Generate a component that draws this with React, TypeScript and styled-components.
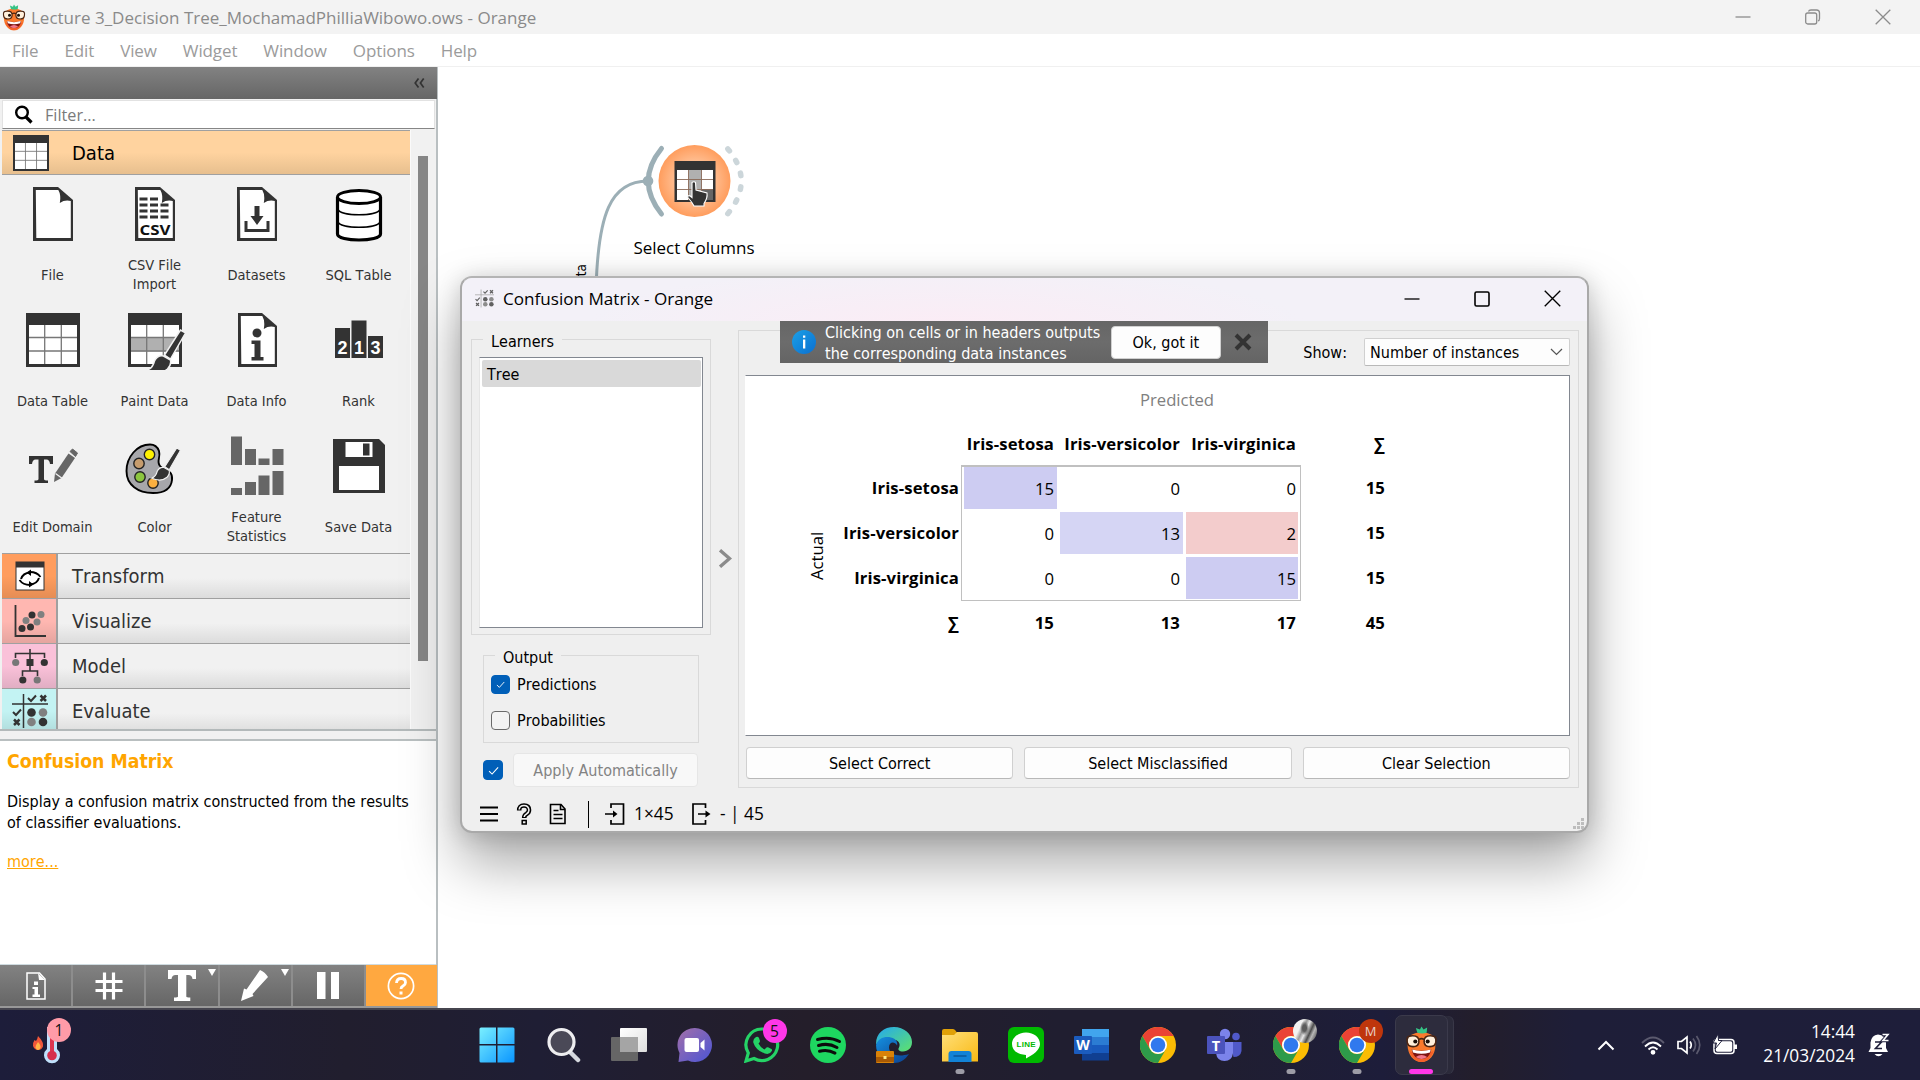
import React from "react";
import styled, { createGlobalStyle, css } from "styled-components";

const SEGOE = `"Open Sans", "Noto Sans", sans-serif`;
const TAHOMA = `"DejaVu Sans Condensed", "DejaVu Sans", sans-serif`;
const INK = "#333333";

const GlobalStyle = createGlobalStyle`
  *, *::before, *::after { box-sizing: border-box; }
  html, body { margin: 0; padding: 0; overflow: hidden; background: #fff; }
  svg { display: block; flex: none; }
`;

/* ---------- desktop shell ---------- */

const Desktop = styled.div`
  position: relative;
  width: 1920px;
  height: 1080px;
  overflow: hidden;
  display: flex;
  flex-direction: column;
  background: #fff;
  font-family: ${TAHOMA};
  font-size: 16px;
  font-kerning: none;
  color: #000;
`;

const TitleBar = styled.header`
  height: 34px;
  flex: none;
  display: flex;
  align-items: center;
  background: #f3f3f3;
  padding-left: 2px;
  color: #8a8a8a;
  font: 17px/34px ${SEGOE};
`;

const TitleText = styled.span`
  flex: 1;
  margin-left: 5px;
  padding-top: 2px;
`;

const WindowButtons = styled.div<{ $gap: number; $end: number }>`
  display: flex;
  align-items: center;
  gap: ${(p) => p.$gap}px;
  padding-right: ${(p) => p.$end}px;
`;

const MenuBar = styled.nav`
  height: 33px;
  flex: none;
  display: flex;
  gap: 26px;
  padding-left: 12px;
  border-bottom: 1px solid #f0f0f0;
  color: #9b9b9b;
  font: 17px/34px ${SEGOE};
  letter-spacing: -0.12px;
`;

const Workspace = styled.main`
  flex: 1;
  min-height: 0;
  display: flex;
`;

/* ---------- left panel ---------- */

const SidePanel = styled.aside`
  width: 438px;
  flex: none;
  display: flex;
  flex-direction: column;
  background: #f1f1f1;
  border-right: 2px solid #b9bfc1;
`;

const PanelHeader = styled.div`
  height: 32px;
  flex: none;
  margin-right: -1px;
  display: flex;
  justify-content: flex-end;
  align-items: center;
  padding-right: 12px;
  background: linear-gradient(#828282, #666666);
`;

const FilterField = styled.div`
  height: 29px;
  flex: none;
  margin: 1px 1px 1px 2px;
  display: flex;
  align-items: center;
  background: #fff;
  border: 1px solid #e2e2e2;
  border-bottom-color: #868686;
  padding-left: 11px;
  gap: 12px;
  color: #7a7a7a;
  font: 16.2px/28px ${SEGOE};
`;

const Toolbox = styled.div`
  height: 599px;
  flex: none;
  display: flex;
  margin-left: 2px;
`;

const Categories = styled.div`
  width: 408px;
  overflow: hidden;
`;

const ScrollTrack = styled.div`
  flex: 1;
  padding: 26px 0 0 7px;
  border-left: 1px solid #fafafa;
`;

const ScrollThumb = styled.div`
  width: 10px;
  height: 505px;
  background: #868686;
`;

const CategoryRow = styled.div<{ $open?: boolean }>`
  height: 45px;
  display: flex;
  border-top: 1px solid #a0a0a0;
  background: linear-gradient(#f1f1f1 55%, #dcdcdc);
  color: #333;
  font-size: 20px;
  line-height: 45px;
  ${(p) =>
    p.$open &&
    css`
      background: linear-gradient(#ffd39f 50%, #e7bf8e);
      border-bottom: 1px solid #a0a0a0;
      color: #000;
    `}
`;

const CategoryIcon = styled.div<{ $color?: string }>`
  width: 56px;
  display: flex;
  align-items: center;
  justify-content: center;
  padding-left: 1px;
  ${(p) =>
    p.$color &&
    css`
      padding-left: 2px;
      border-right: 2px solid #a0a0a0;
      background: linear-gradient(rgba(0, 0, 0, 0) 50%, rgba(0, 0, 0, 0.1)), ${p.$color};
    `}
`;

const CategoryName = styled.span`
  padding-left: 14px;
`;

const WidgetGrid = styled.div`
  display: grid;
  grid-template-columns: repeat(4, 102px);
  grid-auto-rows: 126px;
`;

const WidgetCell = styled.div`
  display: flex;
  flex-direction: column;
  align-items: center;
  padding-top: 9px;
`;

const WidgetLabel = styled.div`
  height: 44px;
  margin-top: 9px;
  padding-right: 1px;
  display: flex;
  align-items: center;
  text-align: center;
  white-space: pre-line;
  color: #333;
  font-size: 14.5px;
  line-height: 19px;
`;

const Splitter = styled.div`
  height: 12px;
  flex: none;
  border-top: 2px solid #b3b9ba;
  border-bottom: 2px solid #b9bfc0;
`;

const HelpPane = styled.section`
  flex: 1;
  background: #fff;
  padding: 8px 0 0 7px;
  border-bottom: 1px solid #cfdbe0;
  line-height: 21px;
`;

const HelpTitle = styled.h1`
  margin: 0;
  font-size: 19.3px;
  line-height: 26px;
  font-weight: 700;
  color: #ffa500;
`;

const HelpText = styled.p`
  margin: 16px 0 18px;
  white-space: pre-line;
`;

const MoreLink = styled.a`
  color: #ffa500;
  text-decoration: underline;
`;

const ToolRow = styled.div`
  height: 43px;
  flex: none;
  margin-right: -1px;
  display: flex;
  gap: 2px;
  background: #8d8d8d;
  border-bottom: 2px solid #989898;
`;

const ToolButton = styled.div<{ $active?: boolean }>`
  position: relative;
  flex: 1;
  display: flex;
  align-items: center;
  justify-content: center;
  background: ${(p) => (p.$active ? "#ffa840" : "linear-gradient(#828282, #666666)")};
`;

const MenuArrow = styled.i`
  position: absolute;
  top: 4px;
  right: 2px;
  border: 4.5px solid transparent;
  border-top: 7px solid #fff;
  border-bottom: 0;
`;

/* ---------- canvas ---------- */

const Canvas = styled.section`
  flex: 1;
  position: relative;
  background: #fff;
`;

const LinkLayer = styled.svg`
  position: absolute;
  left: 0;
  top: 0;
`;

const NodeLabel = styled.div`
  position: absolute;
  left: 156px;
  top: 169px;
  width: 200px;
  text-align: center;
  font: 17px/24px ${SEGOE};
`;

const LinkLabel = styled.div`
  position: absolute;
  left: 134px;
  top: 197px;
  writing-mode: vertical-rl;
  transform: rotate(180deg);
  font: 13.5px/18px ${TAHOMA};
`;

/* ---------- confusion matrix dialog ---------- */

const Dialog = styled.section`
  position: absolute;
  left: 460px;
  top: 276px;
  width: 1129px;
  height: 557px;
  display: flex;
  flex-direction: column;
  border: 2px solid #a9a9a9;
  border-top-color: #b4b4b4;
  border-radius: 12px;
  background: #efefef;
  box-shadow: 0 30px 56px rgba(0, 0, 0, 0.34), 0 2px 22px rgba(0, 0, 0, 0.16);
`;

const DialogTitle = styled.header`
  height: 43px;
  flex: none;
  display: flex;
  align-items: center;
  padding: 0 0 2px 13px;
  border-radius: 10px 10px 0 0;
  background: radial-gradient(ellipse 360px 60px at 43% 110%, #fbecf5, rgba(251, 236, 245, 0)), #f3f1f8;
  font: 17.1px/41px ${SEGOE};
`;

const DialogBody = styled.div`
  flex: 1;
  display: flex;
  min-height: 0;
`;

const ControlColumn = styled.div`
  width: 249px;
  flex: none;
  display: flex;
  flex-direction: column;
  padding: 18px 0 0 9px;
`;

const Group = styled.fieldset<{ $inset?: boolean }>`
  min-width: 0;
  margin: 0;
  padding: 0;
  position: relative;
  border: 1px solid #d9d9d9;
  ${(p) =>
    p.$inset
      ? css`
          width: 216px;
          height: 88px;
          margin: 20px 0 0 12px;
          padding: 19px 0 0 7px;
        `
      : css`
          width: 240px;
          height: 296px;
          padding: 17px 7px 6px;
        `}
`;

const GroupTitle = styled.span`
  position: absolute;
  left: 11px;
  top: -9px;
  padding: 0 8px;
  background: #efefef;
  line-height: 21px;
`;

const LearnerList = styled.div`
  height: 271px;
  padding: 2px 1px 0 2px;
  background: #fff;
  border: 1px solid #828790;
  border-left: 1px solid #e6e6e6;
`;

const LearnerItem = styled.div`
  height: 27px;
  padding-left: 5px;
  background: #d9d9d9;
  border-radius: 2px;
  line-height: 30px;
`;

const CheckLine = styled.label`
  height: 19px;
  margin-bottom: 17px;
  display: flex;
  align-items: center;
  gap: 7px;
  line-height: 24px;
`;

const CheckBox = styled.span<{ $on?: boolean; $size?: number }>`
  width: ${(p) => p.$size ?? 19}px;
  height: ${(p) => p.$size ?? 19}px;
  flex: none;
  display: flex;
  align-items: center;
  justify-content: center;
  border-radius: 4px;
  background: ${(p) => (p.$on ? "#005fb8" : "#f3f3f3")};
  border: 1px solid ${(p) => (p.$on ? "#005fb8" : "#6a6a6a")};
`;

const ApplyRow = styled.div`
  display: flex;
  align-items: center;
  gap: 10px;
  margin: 10px 0 0 12px;
`;

const PushButton = styled.button<{ $muted?: boolean }>`
  flex: 1;
  height: 32px;
  padding: 2px 0 0;
  border: 1px solid ${(p) => (p.$muted ? "#e6e6e6" : "#d0d0d0")};
  border-bottom-color: ${(p) => (p.$muted ? "#e6e6e6" : "#b8b8b8")};
  border-radius: 4px;
  background: ${(p) => (p.$muted ? "#f8f8f8" : "#fdfdfd")};
  color: ${(p) => (p.$muted ? "#838383" : "#000")};
  font: 16px/26px ${TAHOMA};
  ${(p) =>
    p.$muted &&
    css`
      flex: none;
      width: 185px;
      height: 34px;
    `}
`;

const Collapser = styled.div`
  width: 27px;
  flex: none;
  padding: 228px 0 0 7px;
`;

const MatrixGroup = styled.div`
  width: 841px;
  height: 458px;
  margin-top: 9px;
  padding: 7px 8px 0 6px;
  border: 1px solid #d9d9d9;
`;

const ShowRow = styled.div`
  height: 37px;
  display: flex;
  justify-content: flex-end;
  gap: 17px;
  line-height: 29px;
`;

const ComboBox = styled.div`
  width: 206px;
  height: 28px;
  display: flex;
  align-items: center;
  justify-content: space-between;
  padding: 0 6px 0 5px;
  border: 1px solid #d0d0d0;
  border-bottom-color: #b8b8b8;
  border-radius: 2px;
  background: #fdfdfd;
`;

const MatrixView = styled.div`
  height: 361px;
  background: #fff;
  border: 1px solid #828790;
  border-left-color: #fff;
  font: 16.7px/24px ${SEGOE};
`;

const MatrixGrid = styled.div`
  display: grid;
  grid-template-columns: 77px 138px 98px 126px 116px 89px;
  grid-template-rows: 46px 43px repeat(4, 45px);
`;

const AxisTop = styled.div`
  grid-column: 3 / 6;
  padding-top: 12px;
  padding-left: 92px;
  text-align: center;
  color: #808080;
`;

const AxisSide = styled.div`
  grid-column: 1;
  grid-row: 3 / 6;
  writing-mode: vertical-rl;
  transform: rotate(180deg);
  text-align: center;
  line-height: 22px;
  padding-right: 60px;
  padding-bottom: 46px;
  white-space: nowrap;
`;

const HeadCell = styled.div<{ $col: number; $row: number }>`
  grid-column: ${(p) => p.$col};
  grid-row: ${(p) => p.$row};
  display: flex;
  align-items: center;
  justify-content: flex-end;
  padding-top: ${(p) => (p.$row > 2 ? 1 : 0)}px;
  padding-right: ${(p) => (p.$col === 2 ? 2 : 5)}px;
  font-weight: 700;
  letter-spacing: 0.11px;
  white-space: nowrap;
`;

const MatrixFrame = styled.div`
  grid-column: 3 / 6;
  grid-row: 3 / 6;
  border: 1px solid #c0c0c0;
  border-top-width: 2px;
  margin-bottom: -1px;
`;

const ValueCell = styled.div<{ $col: number; $row: number; $fill?: string }>`
  grid-column: ${(p) => p.$col};
  grid-row: ${(p) => p.$row};
  margin: 2px ${(p) => (p.$col === 5 ? 3 : 2)}px 1px ${(p) => (p.$col === 3 ? 3 : 1)}px;
  padding: 1px ${(p) => (p.$col === 5 ? 2 : 3)}px 0 0;
  display: flex;
  align-items: center;
  justify-content: flex-end;
  background: ${(p) => p.$fill ?? "transparent"};
`;

const ButtonRow = styled.div`
  display: flex;
  gap: 11px;
  margin: 11px 0 0 1px;
`;

const StatusBar = styled.footer`
  height: 45px;
  flex: none;
  display: flex;
  align-items: center;
  padding: 11px 2px 0 17px;
  font: 17.3px/24px ${SEGOE};
`;

const StatusDivider = styled.i`
  width: 1px;
  height: 27px;
  margin: 0 16px 0 21px;
  background: #000;
`;

const StatusText = styled.span<{ $w: number }>`
  width: ${(p) => p.$w}px;
  margin-left: 9px;
  white-space: nowrap;
`;

const SizeGrip = styled.svg`
  align-self: flex-end;
  margin-bottom: 1px;
`;

const Spacer = styled.i<{ $w?: number }>`
  ${(p) => (p.$w ? `width: ${p.$w}px; flex: none;` : "flex: 1;")}
`;

const HintBar = styled.aside`
  position: absolute;
  left: 318px;
  top: 43px;
  width: 488px;
  height: 42px;
  display: flex;
  align-items: center;
  padding: 0 16px 0 12px;
  background: linear-gradient(#666, #6c6c6c 50%, #646464);
  color: #fff;
  line-height: 21px;
`;

const HintText = styled.p`
  margin: 1px 0 0 9px;
  width: 287px;
  white-space: pre;
`;

const HintButton = styled.button`
  width: 111px;
  height: 33px;
  margin-right: 13px;
  padding: 1px 0 0;
  border: 1px solid #d0d0d0;
  border-radius: 4px;
  background: #fdfdfd;
  font: 16px/30px ${TAHOMA};
`;

/* ---------- taskbar ---------- */

const Taskbar = styled.footer`
  position: relative;
  height: 72px;
  flex: none;
  display: flex;
  align-items: center;
  border-top: 2px solid #46454f;
  background: linear-gradient(90deg, #1d1d3a, #211e2e 18%, #1f1e34 28%, #241e2a 42%, #201e30 55%, #201e30 63%, #1d1d3a 72%, #231e2b 77%, #1e1e38 82%, #1e1e3a);
  color: #fff;
`;

const WeatherSlot = styled.div`
  width: 464px;
  padding-left: 30px;
`;

const AppSlot = styled.div<{ $focused?: boolean }>`
  position: relative;
  width: 66.13px;
  height: 60px;
  flex: none;
  display: flex;
  align-items: center;
  justify-content: center;
  ${(p) =>
    p.$focused &&
    css`
      width: 53px;
      margin-left: 5px;
      border: 1px solid #3b3a4b;
      border-radius: 7px;
      background: #2d2c3d;
      box-shadow: 6px 0 0 -1px #2b2a3a, 7px 0 0 -1px #393848;
    `}
`;

const Badge = styled.span<{ $bg: string; $fg: string; $profile?: boolean }>`
  position: absolute;
  left: ${(p) => (p.$profile ? 35 : 34)}px;
  top: 4px;
  width: 24px;
  height: 24px;
  border-radius: 50%;
  background: ${(p) => p.$bg};
  color: ${(p) => p.$fg};
  text-align: center;
  font: ${(p) => (p.$profile ? 13 : 15.5)}px/24px ${SEGOE};
`;

const WeatherBadge = styled(Badge)`
  left: 47px;
  top: 8px;
`;

const RunMark = styled.i<{ $active?: boolean }>`
  position: absolute;
  bottom: ${(p) => (p.$active ? 0 : 1)}px;
  left: 50%;
  transform: translateX(-50%);
  width: ${(p) => (p.$active ? 24 : 9)}px;
  height: 5px;
  border-radius: 3px;
  background: ${(p) => (p.$active ? "#ff37e8" : "#9d9ca6")};
`;

const Tray = styled.div`
  flex: 1;
  display: flex;
  align-items: center;
  justify-content: flex-end;
  padding-right: 30px;
`;

const Clock = styled.div`
  width: 118px;
  text-align: right;
  font: 17.3px/24px ${SEGOE};
  margin-right: 13px;
  margin-top: -2px;
  white-space: nowrap;
`;

/* ---------- drawings ---------- */

const WindowGlyph = ({ kind, color, size = 16 }: { kind: "min" | "restore" | "max" | "close"; color: string; size?: number }) => (
  <svg width={size} height={size} viewBox="0 0 16 16" fill="none" stroke={color} strokeWidth="1.3">
    {kind === "min" && <path d="M0.5 8h15" />}
    {kind === "restore" && (
      <>
        <rect x="0.700" y="4" width="11" height="11" rx="2" />
        <path d="M3.500 2.500Q4 1 6 1H11.500q3 0 3 3v5.500q0 2-1.500 2.500" />
      </>
    )}
    {kind === "max" && <rect x="1" y="1" width="14" height="14" rx="1.500" strokeWidth="1.600" />}
    {kind === "close" && <path d="M0.700 0.700l14.600 14.600M15.300 0.700L0.700 15.300" />}
  </svg>
);

const OrangeFace = ({ size }: { size: number }) => (
  <svg width={size} height={(size * 36) / 32} viewBox="0 0 32 36">
    <path d="M16 6C6.500 6 2.500 11 2.500 18.500 2.500 28 8.500 35 16 35s13.500-7 13.500-16.500C29.500 11 25.500 6 16 6z" fill="#fa7a2d" />
    <path d="M4 24c2.500 7 7 11 12 11s9.500-4 12-11c-6 4-18 4-24 0z" fill="#f4602a" />
    <path d="M12 6.500L10.500 2l4 1.500L16 .5l2 3 3.500-2-.5 5q-4.500 1.500-9 0z" fill="#35c486" />
    <circle cx="7.800" cy="14.500" r="5.200" fill="#fff0dc" />
    <circle cx="24.200" cy="14.500" r="5.200" fill="#fff0dc" />
    <path d="M2 12Q2.500 9.500 7.500 9.500q6 0 6 5.200 0 5.300-5.700 5.300T2 14.500zM30 12Q29.500 9.500 24.500 9.500q-6 0-6 5.200 0 5.300 5.700 5.300T30 14.500zM13.500 13q2.500-1.500 5 0" fill="none" stroke="#4a2614" strokeWidth="1.500" />
    <circle cx="10" cy="15" r="2" fill="#1a0f0a" />
    <circle cx="22" cy="15" r="2" fill="#1a0f0a" />
    <path d="M6.500 22.500q9.500 3 19 0c-1 6.500-5 9.500-9.500 9.500s-8.500-3-9.500-9.500z" fill="#7d1512" />
    <path d="M7 22.800q9 2.800 18 0l-.8 3q-8.200 2.300-16.400 0z" fill="#fff" />
    <path d="M10.500 30q5.500-4 11 0-5.500 4-11 0z" fill="#f2788a" />
  </svg>
);

const GridTable = ({ size, shaded }: { size: number; shaded?: boolean }) => (
  <svg width={size} height={size} viewBox="0 0 54 54">
    <rect width="54" height="54" fill={INK} />
    <rect x="3" y="12" width="48" height="39" fill="#fff" />
    {shaded && <rect x="3" y="25" width="48" height="13.500" fill="#b0b0b0" />}
    <path d="M3 24.500h48M3 38h48M18.700 12v39M35.300 12v39" stroke="#777" strokeWidth="1.300" />
  </svg>
);

const Sheet = ({ x = 10, w = 40 }: { x?: number; w?: number }) => (
  <>
    <path d={`M${x} 3h${w - 15}l15 13v41h-${w}z`} fill={INK} />
    <path d={`M${x + 2.8} 6h${w - 17.5}q3 5 1.500 13 5-3.500 11-2v37h-${w - 5.5}z`} fill="#fff" />
  </>
);

const Brush = ({ at }: { at: string }) => (
  <g transform={at}>
    <path d="M33-2L17 23l6 4L38 1z" fill={INK} stroke="#f1f1f1" strokeWidth="1.500" />
    <path d="M16 24q-6-1-9 5-2 8-8 9 13 6 21-1 4-4 3-9z" fill={INK} stroke="#f1f1f1" strokeWidth="1.500" />
  </g>
);

const widgetArt: Record<string, React.ReactNode> = {
  file: <Sheet />,
  csv: (
    <>
      <Sheet />
      <path d="M14.500 15h19M14.500 21h29M14.500 27h29M14.500 33h29" stroke={INK} strokeWidth="3" strokeDasharray="8 2.500" />
      <text x="30" y="51" textAnchor="middle" fontFamily="Open Sans" fontWeight="700" fontSize="15" fill="#111" textLength="31" lengthAdjust="spacingAndGlyphs">
        CSV
      </text>
    </>
  ),
  datasets: (
    <>
      <Sheet />
      <path d="M27.500 22h5v10h4L30 41l-6.500-9h4z" fill={INK} />
      <path d="M19 37v9.500h22V37" fill="none" stroke={INK} strokeWidth="3" />
    </>
  ),
  sql: (
    <>
      <path d="M8.500 13v37c0 8 43 8 43 0V13" fill="#fff" stroke="#000" strokeWidth="3.200" />
      <ellipse cx="30" cy="13" rx="21.500" ry="6.500" fill="#fff" stroke="#000" strokeWidth="3" />
      <path d="M9 25.500c3 7 39 7 42 0M9 38c3 7 39 7 42 0" fill="none" stroke="#000" strokeWidth="1.600" />
    </>
  ),
  info: (
    <>
      <Sheet x={11} w={39} />
      <circle cx="30" cy="23" r="4.500" fill={INK} />
      <path d="M24.500 30.500h9V47h3v3.500h-12V47h3V34h-3z" fill={INK} />
    </>
  ),
  rank: (
    <>
      <path d="M6 18h15v30H6zM22.500 10.500h15v37.500h-15zM39 26h15v22H39z" fill={INK} />
      <g fill="#fff" fontFamily="Liberation Sans" fontWeight="700" fontSize="18" textAnchor="middle">
        <text x="13.500" y="43.500">2</text>
        <text x="30" y="43.500">1</text>
        <text x="46.500" y="43.500">3</text>
      </g>
    </>
  ),
  domain: (
    <>
      <path d="M6 20h24v8h-3q-.5-4.500-3.500-4.500H21V43q0 1.500 4 1.500v2.500H11.500v-2.500q4 0 4-1.500V23.500H12.500Q9.500 23.500 9 28H6z" fill={INK} />
      <path d="M31 46l1-8.500 13.500-20L52 22 38.500 42z" fill="#666" />
      <path d="M47 15.500l2.500-2.500 5 4-2 3.500z" fill="#666" stroke="#666" />
      <path d="M32.500 37.500l6.500 4.700" stroke="#f1f1f1" strokeWidth="1.300" />
    </>
  ),
  color: (
    <>
      <path d="M25 8.500C12 8.500 1.500 21 1.500 35S13 57 28 57c11 0 18-4 19-13 1-11-7-8-12-14-4-5 1-8-1-15-1.500-4-4.500-6.500-9-6.500z" fill="#a7a7ab" stroke="#000" strokeWidth="1.900" />
      <g stroke="#222" strokeWidth="1.400">
        <circle cx="24.500" cy="18.500" r="5.200" fill="#fff200" />
        <circle cx="14" cy="27.500" r="5.200" fill="#c69c6d" />
        <circle cx="15" cy="41" r="5.200" fill="#8cc63f" />
        <circle cx="28" cy="47" r="5.200" fill="#fbb040" />
      </g>
      <Brush at="translate(27 13.500) scale(.75)" />
    </>
  ),
  stats: (
    <g fill="#666">
      <path d="M4 0.500h11v28.500H4zM18 13h11v16H18zM31.500 22.500h11V29h-11zM45.500 13h11v16h-11z" />
      <path d="M4 52h11v7H4zM18 46h11v13H18zM31.500 39.500h11V59h-11zM45.500 35h11v24h-11z" />
    </g>
  ),
  save: (
    <>
      <path d="M4 3h46l6 6v48H4z" fill={INK} />
      <path d="M16.500 6h27v15h-27zM10 30h40v24H10z" fill="#fff" />
      <rect x="34" y="7.500" width="6.500" height="12" fill={INK} />
    </>
  ),
  table: (
    <g transform="translate(3 3)">
      <GridTable size={54} />
    </g>
  ),
  paint: (
    <>
      <g transform="translate(3 3)">
        <GridTable size={54} shaded />
      </g>
      <Brush at="translate(22.500 22)" />
    </>
  ),
};

const ConfusionGlyph = ({ size, ink = INK, soft = "#808080", rule = INK }: { size: number; ink?: string; soft?: string; rule?: string }) => (
  <svg width={size} height={size} viewBox="0 0 36 36" fill="none">
    <path d="M0 11h36M11.500 1v34" stroke={rule} strokeWidth="1.500" />
    <path d="M16 5l3 3 5-5.500M1 19l3 3 5-5.500" stroke={ink} strokeWidth="2" />
    <path d="M28.500 2.500l5.500 5.500M34 2.500L28.500 8M2 26.500l5.500 5.500M7.500 26.500L2 32" stroke={ink} strokeWidth="2.500" />
    <circle cx="19.500" cy="19.500" r="4.300" fill={ink} />
    <circle cx="31" cy="19.500" r="4.300" fill={soft} />
    <circle cx="19.500" cy="29" r="4.300" fill={soft} />
    <circle cx="31" cy="29" r="4.300" fill={ink} />
  </svg>
);

const TransformGlyph = () => (
  <svg width="30" height="30" viewBox="0 0 30 30">
    <rect x="0.500" y="0.500" width="29" height="29" fill={INK} />
    <rect x="1.500" y="6.500" width="27" height="22" fill="#fff" />
    <path d="M6 18q2-6 9-6.500M24 17q-2 6-9 6.500" fill="none" stroke="#000" strokeWidth="2" />
    <path d="M16 8.500v6.500L11.500 11.500zM14 20v6.500l4.500-3z" fill="#000" />
    <path d="M15 11q7 0 10.500 5M15 24q-7 0-10.500-5" fill="none" stroke="#000" strokeWidth="1.800" />
  </svg>
);

const VisualizeGlyph = () => (
  <svg width="34" height="34" viewBox="0 0 34 34">
    <path d="M2.500 1v31H33" fill="none" stroke={INK} strokeWidth="1.800" />
    <g fill={INK}>
      <circle cx="9" cy="24.500" r="3.500" />
      <circle cx="17.500" cy="23" r="3.500" />
      <circle cx="19" cy="11" r="3.500" />
    </g>
    <g fill="#808080">
      <circle cx="13" cy="16.500" r="3.500" />
      <circle cx="24" cy="18" r="3.500" />
      <circle cx="28" cy="10.500" r="3.500" />
    </g>
  </svg>
);

const ModelGlyph = () => (
  <svg width="36" height="36" viewBox="0 0 36 36">
    <path d="M3.500 10V5.500h29V10M18 1v10M10.500 28v-5h15v5M18 18v5" fill="none" stroke={INK} strokeWidth="1.600" />
    <rect x="14.500" y="11" width="7" height="7" fill={INK} />
    <circle cx="3.700" cy="14.500" r="3.600" fill="#777" />
    <circle cx="32.300" cy="14.500" r="3.600" fill={INK} />
    <circle cx="10.800" cy="32" r="3.600" fill={INK} />
    <circle cx="25.200" cy="32" r="3.600" fill="#777" />
  </svg>
);

const Check = ({ size }: { size: number }) => (
  <svg width={size} height={size} viewBox="0 0 10 10" fill="none" stroke="#fff" strokeWidth="1">
    <path d="M1 5.500l2.700 2.700L9.200 2.200" />
  </svg>
);

const Chrome = () => (
  <svg width="36" height="36" viewBox="0 0 36 36">
    <circle cx="18" cy="18" r="18" fill="#fbbc04" />
    <path d="M2.400 9A18 18 0 0 1 33.600 9H18a9 9 0 0 0-7.800 13.500z" fill="#ea4335" />
    <path d="M2.400 9l7.800 13.500A9 9 0 0 0 25.800 22.500L18 36A18 18 0 0 1 2.400 9z" fill="#2e9b4a" />
    <circle cx="18" cy="18" r="9" fill="#fff" />
    <circle cx="18" cy="18" r="7.300" fill="#3079ee" />
  </svg>
);

const Gradient = ({ id, from, to }: { id: string; from: string; to: string }) => (
  <linearGradient id={id} x1="0" y1="0" x2="1" y2="1">
    <stop stopColor={from} />
    <stop offset="1" stopColor={to} />
  </linearGradient>
);

const appArt: Record<string, React.ReactNode> = {
  windows: (
    <>
      <defs><Gradient id="win" from="#7af0ff" to="#0a95ff" /></defs>
      <path d="M.5 2q0-1.500 1.500-1.500h15V17H.500zM18.500.500h15.500q1.500 0 1.500 1.500v15H18.500zM.5 18.500H17v17H2q-1.500 0-1.500-1.500zM18.500 18.500h17V34q0 1.500-1.500 1.500H18.500z" fill="url(#win)" />
    </>
  ),
  search: (
    <>
      <path d="M25 25l8 8" stroke="#d5d8de" strokeWidth="4.500" strokeLinecap="round" />
      <circle cx="16.500" cy="15" r="12.500" fill="#4a4957" stroke="#eeeef0" strokeWidth="3.200" />
    </>
  ),
  taskview: (
    <>
      <defs><Gradient id="tv" from="#fff" to="#dedede" /></defs>
      <rect x="0" y="10" width="27" height="24" rx="1" fill="#666" />
      <rect x="9" y="1" width="27" height="24" rx="1" fill="url(#tv)" />
      <rect x="9" y="10" width="18" height="15" fill="#a5a5a5" />
    </>
  ),
  chat: (
    <>
      <defs><Gradient id="chat" from="#a36fa8" to="#4b55d6" /></defs>
      <path d="M18 1a17 17 0 1 1-7 32.500L1.500 35l1-9A17 17 0 0 1 18 1z" fill="url(#chat)" />
      <rect x="7.500" y="11" width="14.500" height="14" rx="2" fill="#fff" />
      <path d="M23.500 16l4-3.500v11l-4-3.500z" fill="#fff" />
    </>
  ),
  whatsapp: (
    <>
      <path d="M18.500 2A15.800 15.800 0 1 1 10 31.500L2 34l2.300-8A15.800 15.800 0 0 1 18.500 2z" fill="none" stroke="#25d366" strokeWidth="3.200" />
      <path d="M12 10q2-1 3 1l1 3q0 1-1.500 2.500 2 4 6 6l2-2q.6-.6 1.500-.2l3.500 1.700q1 .6.300 2-2 4-7 2.500-9-3-11.500-11-.5-3.500 2.700-5.500z" fill="#25d366" />
    </>
  ),
  spotify: (
    <>
      <circle cx="18" cy="18" r="18" fill="#1ed760" />
      <path d="M7.500 12.500q12-3.500 22 2M8.500 18.500q10-3 18.500 2M9.500 24.300q8-2.500 15.500 1.800" fill="none" stroke="#0c0c0c" strokeWidth="3" strokeLinecap="round" />
    </>
  ),
  edge: (
    <>
      <defs>
        <Gradient id="edgeTop" from="#23a7f2" to="#5fe36a" />
        <Gradient id="edgeLow" from="#1590e0" to="#0b3f8f" />
      </defs>
      <path d="M0 17C0 6 8 0 18 0s18 7 18 15c0 6-4 9.500-9 9.500-4 0-5.500-2-4-4 2-4-1-8-6-8-7 0-12 3-17 4.500z" fill="url(#edgeTop)" />
      <path d="M0 18C2 11 9 9 15 10.500c5 1 7 5 6 8-3-5-8-3-8 2 0 7 9 10 20 6.500-4 6-9 9-15 9C8 36 0 28 0 18z" fill="url(#edgeLow)" />
      <rect x="0" y="24" width="18" height="12" rx="1" fill="#d98208" />
      <path d="M0 30h18v5H0z" fill="#a95a04" />
      <rect x="7.500" y="29" width="3" height="3" fill="#ffe680" />
    </>
  ),
  folder: (
    <>
      <defs><Gradient id="fold" from="#ffe07a" to="#f9b914" /></defs>
      <path d="M0 4q0-2 2-2h9q1.500 0 2.500 1.500L16 7v4H0z" fill="#e0a108" />
      <path d="M0 8h12l3-3h19q2 0 2 2v27.500H0z" fill="url(#fold)" />
      <path d="M6.500 35V27q0-3 3-3h17q3 0 3 3v8z" fill="#1282d6" />
      <path d="M11.500 29h13" stroke="#0a5698" strokeWidth="1.500" />
    </>
  ),
  line: (
    <>
      <rect width="36" height="36" rx="6" fill="#00b900" />
      <path d="M18 5.500c8 0 14 5 14 11.500 0 6-7 11-14 14.500v-3.500C9 27.500 4 23 4 17S10 5.500 18 5.500z" fill="#fff" />
      <text x="18" y="20" textAnchor="middle" fontFamily="Liberation Sans" fontWeight="700" fontSize="8" fill="#00b900" textLength="19">LINE</text>
    </>
  ),
  word: (
    <>
      <path d="M8 2h27v9H8z" fill="#41a5ee" />
      <path d="M8 10h27v8H8z" fill="#2b7cd3" />
      <path d="M8 18h27v8.500H8z" fill="#185abd" />
      <path d="M8 26h27v7.500H8z" fill="#103f91" />
      <rect x="0" y="9" width="18" height="18" rx="1" fill="#1b5cbe" />
      <text x="9" y="23" textAnchor="middle" fontFamily="Open Sans" fontWeight="700" fontSize="14" fill="#fff">W</text>
    </>
  ),
  teams: (
    <>
      <circle cx="19" cy="7" r="5.200" fill="#7b83eb" />
      <circle cx="30" cy="9.500" r="3.800" fill="#5059c9" />
      <path d="M24 15h11.500v9q-1 6-8 6z" fill="#5059c9" />
      <path d="M10 15h17v11q-1 8-8.500 8T10 26z" fill="#7b83eb" />
      <rect x="1" y="9" width="18" height="18" rx="1" fill="#4b53bc" />
      <text x="10" y="23.500" textAnchor="middle" fontFamily="Open Sans" fontWeight="700" fontSize="14.500" fill="#fff">T</text>
    </>
  ),
};

const AppIcon = ({ name }: { name: string }) => (
  <svg width="36" height="36" viewBox="0 0 36 36">{appArt[name]}</svg>
);

const CanvasNode = () => (
  <LinkLayer width="420" height="220" viewBox="438 67 420 220">
    <defs>
      <radialGradient id="node">
        <stop offset="0" stopColor="#ffd9bd" />
        <stop offset="0.550" stopColor="#ffbd90" />
        <stop offset="1" stopColor="#ff9d5d" />
      </radialGradient>
    </defs>
    <path d="M648 181C610 181 598 215 596 290" fill="none" stroke="#9cafb6" strokeWidth="3" />
    <path d="M661.500 148.500Q635 181 661.500 214" fill="none" stroke="#9cafb6" strokeWidth="5" strokeLinecap="round" />
    <circle cx="648" cy="181" r="5.300" fill="#9cafb6" />
    <path d="M727.500 148.500Q755 181 727.500 214" fill="none" stroke="#ccd6da" strokeWidth="5.500" strokeLinecap="round" strokeDasharray="2.500 11.300" strokeDashoffset="-0.500" />
    <circle cx="694.500" cy="181" r="36" fill="url(#node)" />
    <g transform="translate(674.500 161)">
      <rect width="41" height="41" fill={INK} />
      <path d="M2.500 9h36v30h-36z" fill="#fff" />
      <path d="M14 9h13v30H14z" fill="#b0b0b0" />
      <path d="M27 28h11.500v11H27z" fill="#666" />
      <path d="M2.500 18.500h36M2.500 28.500h36M14 9v30M27 9v30" stroke="#8a6a58" strokeWidth="0.900" />
      <path d="M17.500 21.500q2-1.500 3.500 0l.5 7.500 11 3q.8 5-3 10.500v2.500H19.500q-2-4-6.500-9 1-3 4.500.5z" fill={INK} stroke="#fff" strokeWidth="1.100" />
    </g>
  </LinkLayer>
);

/* ---------- data ---------- */

const widgets = [
  ["file", "File"],
  ["csv", "CSV File\nImport"],
  ["datasets", "Datasets"],
  ["sql", "SQL Table"],
  ["table", "Data Table"],
  ["paint", "Paint Data"],
  ["info", "Data Info"],
  ["rank", "Rank"],
  ["domain", "Edit Domain"],
  ["color", "Color"],
  ["stats", "Feature\nStatistics"],
  ["save", "Save Data"],
];

const categories: [string, string, React.ReactNode][] = [
  ["Transform", "#ff9d5e", <TransformGlyph />],
  ["Visualize", "#ffb7b1", <VisualizeGlyph />],
  ["Model", "#fac1d9", <ModelGlyph />],
  ["Evaluate", "#c3f3f3", <ConfusionGlyph size={36} />],
];

const classes = ["Iris-setosa", "Iris-versicolor", "Iris-virginica"];
const matrix = [
  [15, 0, 0],
  [0, 13, 2],
  [0, 0, 15],
];
const fills: Record<number, string> = { 15: "#cdccf2", 13: "#d5d5f4", 2: "#f3cccc" };
const rowTotals = [15, 15, 15, 45];
const colTotals = [15, 13, 17];

const pinned = ["windows", "search", "taskview", "chat", "whatsapp", "spotify", "edge", "folder", "line", "word"];

export default function App() {
  return (
    <Desktop>
      <GlobalStyle />
      <TitleBar>
        <OrangeFace size={24} />
        <TitleText>Lecture 3_Decision Tree_MochamadPhilliaWibowo.ows - Orange</TitleText>
        <WindowButtons $gap={54} $end={29}>
          <WindowGlyph kind="min" color="#8c8c8c" />
          <WindowGlyph kind="restore" color="#8c8c8c" />
          <WindowGlyph kind="close" color="#8c8c8c" />
        </WindowButtons>
      </TitleBar>
      <MenuBar>
        {["File", "Edit", "View", "Widget", "Window", "Options", "Help"].map((m) => (
          <span key={m}>{m}</span>
        ))}
      </MenuBar>

      <Workspace>
        <SidePanel>
          <PanelHeader>
            <svg width="11" height="10" viewBox="0 0 11 10" fill="none" stroke="#333" strokeWidth="1.700">
              <path d="M4.500 0.500L1.200 5l3.300 4.500M9.700 0.500L6.400 5l3.300 4.500" />
            </svg>
          </PanelHeader>
          <FilterField>
            <svg width="19" height="19" viewBox="0 0 19 19" fill="none" stroke="#000">
              <circle cx="8" cy="7.500" r="5.800" strokeWidth="2.400" />
              <path d="M12 12l5.500 5.500" strokeWidth="3.200" />
            </svg>
            Filter...
          </FilterField>
          <Toolbox>
            <Categories>
              <CategoryRow $open>
                <CategoryIcon>
                  <GridTable size={36} />
                </CategoryIcon>
                <CategoryName>Data</CategoryName>
              </CategoryRow>
              <WidgetGrid>
                {widgets.map(([art, name]) => (
                  <WidgetCell key={art}>
                    <svg width="60" height="60" viewBox="0 0 60 60">{widgetArt[art]}</svg>
                    <WidgetLabel>{name}</WidgetLabel>
                  </WidgetCell>
                ))}
              </WidgetGrid>
              {categories.map(([name, color, glyph]) => (
                <CategoryRow key={name}>
                  <CategoryIcon $color={color}>{glyph}</CategoryIcon>
                  <CategoryName>{name}</CategoryName>
                </CategoryRow>
              ))}
            </Categories>
            <ScrollTrack>
              <ScrollThumb />
            </ScrollTrack>
          </Toolbox>
          <Splitter />
          <HelpPane>
            <HelpTitle>Confusion Matrix</HelpTitle>
            <HelpText>{"Display a confusion matrix constructed from the results\nof classifier evaluations."}</HelpText>
            <MoreLink>more...</MoreLink>
          </HelpPane>
          <ToolRow>
            <ToolButton>
              <svg width="20" height="28" viewBox="0 0 20 28">
                <path d="M1 1h12.500L19 7v20H1z" fill="none" stroke="#fff" strokeWidth="1.500" />
                <path d="M12 1l1 7h6zM8 9.500h4v3.500H8zM6.500 15h5.500v7.500h2V25H6.500v-2.500h2V17h-2z" fill="#fff" />
              </svg>
            </ToolButton>
            <ToolButton>
              <svg width="28" height="28" viewBox="0 0 28 28" stroke="#fff" strokeWidth="3.200" fill="none">
                <path d="M9.500 0.500v27M18.500 0.500v27M0.500 9.500h27M0.500 18.500h27" />
              </svg>
            </ToolButton>
            <ToolButton>
              <svg width="28" height="31" viewBox="0 0 28 31" fill="#fff">
                <path d="M0 0h28v9h-3.500q-.5-4-4-4h-2.200V26.500q0 1 4 1V31H6v-3.500q4 0 4-1V5H7.500q-3.500 0-4 4H0z" />
              </svg>
              <MenuArrow />
            </ToolButton>
            <ToolButton>
              <svg width="28" height="31" viewBox="0 0 28 31" fill="#fff">
                <path d="M19 0q5 2 8 7L11.500 24l1 2L0 31l3-12.500 2.500 1z" />
              </svg>
              <MenuArrow />
            </ToolButton>
            <ToolButton>
              <svg width="24" height="27" viewBox="0 0 24 27" fill="#fff">
                <path d="M1 0h8.500v27H1zM15 0h8v27h-8z" />
              </svg>
            </ToolButton>
            <ToolButton $active>
              <svg width="28" height="28" viewBox="0 0 28 28" fill="none" stroke="#fff">
                <circle cx="14" cy="14" r="12.600" strokeWidth="1.700" />
                <path d="M9.500 11q.3-4.500 4.700-4.500 4.300 0 4.300 4 0 2-2.500 3.500-2 1.200-2 3" strokeWidth="2.800" />
                <path d="M14 19.500v3" strokeWidth="3" />
              </svg>
            </ToolButton>
          </ToolRow>
        </SidePanel>

        <Canvas>
          <CanvasNode />
          <NodeLabel>Select Columns</NodeLabel>
          <LinkLabel>Data</LinkLabel>
        </Canvas>
      </Workspace>

      <Dialog>
        <DialogTitle>
          <ConfusionGlyph size={19} ink="#606060" soft="#8c8c8c" rule="#a8a8a8" />
          <Spacer $w={9} />
          <span>Confusion Matrix - Orange</span>
          <Spacer />
          <WindowButtons $gap={54} $end={26}>
            <WindowGlyph kind="min" color="#000" />
            <WindowGlyph kind="max" color="#000" />
            <WindowGlyph kind="close" color="#000" size={17} />
          </WindowButtons>
        </DialogTitle>

        <DialogBody>
          <ControlColumn>
            <Group>
              <GroupTitle>Learners</GroupTitle>
              <LearnerList>
                <LearnerItem>Tree</LearnerItem>
              </LearnerList>
            </Group>
            <Group $inset>
              <GroupTitle>Output</GroupTitle>
              <CheckLine>
                <CheckBox $on>
                  <Check size={9} />
                </CheckBox>
                Predictions
              </CheckLine>
              <CheckLine>
                <CheckBox />
                Probabilities
              </CheckLine>
            </Group>
            <ApplyRow>
              <CheckBox $on $size={20}>
                <Check size={11} />
              </CheckBox>
              <PushButton $muted>Apply Automatically</PushButton>
            </ApplyRow>
          </ControlColumn>
          <Collapser>
            <svg width="15" height="19" viewBox="0 0 15 19" fill="none" stroke="#8b8b8b" strokeWidth="3.300">
              <path d="M2 1.200l9.500 8.300L2 17.800" />
            </svg>
          </Collapser>
          <MatrixGroup>
            <ShowRow>
              <span>Show:</span>
              <ComboBox>
                Number of instances
                <svg width="13" height="8" viewBox="0 0 13 8" fill="none" stroke="#555" strokeWidth="1.200">
                  <path d="M1 1l5.500 5.500L12 1" />
                </svg>
              </ComboBox>
            </ShowRow>
            <MatrixView>
              <MatrixGrid>
                <AxisTop>Predicted</AxisTop>
                <AxisSide>Actual</AxisSide>
                {[...classes, "∑"].map((name, i) => (
                  <HeadCell key={`c${name}`} $col={i + 3} $row={2}>{name}</HeadCell>
                ))}
                {[...classes, "∑"].map((name, i) => (
                  <HeadCell key={`r${name}`} $col={2} $row={i + 3}>{name}</HeadCell>
                ))}
                <MatrixFrame />
                {matrix.flatMap((row, r) =>
                  row.map((v, c) => (
                    <ValueCell key={`${r}-${c}`} $col={c + 3} $row={r + 3} $fill={fills[v]}>{v}</ValueCell>
                  ))
                )}
                {rowTotals.map((v, r) => (
                  <HeadCell key={`rt${r}`} $col={6} $row={r + 3}>{v}</HeadCell>
                ))}
                {colTotals.map((v, c) => (
                  <HeadCell key={`ct${c}`} $col={c + 3} $row={6}>{v}</HeadCell>
                ))}
              </MatrixGrid>
            </MatrixView>
            <ButtonRow>
              <PushButton>Select Correct</PushButton>
              <PushButton>Select Misclassified</PushButton>
              <PushButton>Clear Selection</PushButton>
            </ButtonRow>
          </MatrixGroup>
        </DialogBody>

        <StatusBar>
          <svg width="20" height="16" viewBox="0 0 20 16" stroke="#000" strokeWidth="2.200">
            <path d="M1 1.500h18M1 8h18M1 14.500h18" />
          </svg>
          <Spacer $w={17} />
          <svg width="16" height="22" viewBox="0 0 16 22" fill="none" stroke="#000">
            <path d="M3.200 7.500Q3 2.500 8 2.500t5 4.500q0 2.500-2.500 4Q8.200 12.200 8.200 15" strokeWidth="4.600" />
            <path d="M3.200 6.500Q3.500 2.500 8 2.500t5 4.500q0 2.500-2.500 4Q8.200 12.200 8.200 14" stroke="#efefef" strokeWidth="1.600" />
            <rect x="6.200" y="17.500" width="4" height="3.500" strokeWidth="1.500" />
          </svg>
          <Spacer $w={17} />
          <svg width="18" height="22" viewBox="0 0 18 22" fill="none" stroke="#000" strokeWidth="1.600">
            <path d="M1.500 1.500H12L16 6v14.500H1.500z" />
            <path d="M11.500 1.500V6.500H16M4.500 7.500h5M4.500 11.500h9M4.500 15.500h9" />
          </svg>
          <StatusDivider />
          <svg width="20" height="24" viewBox="0 0 20 24" fill="none" stroke="#000" strokeWidth="1.700">
            <path d="M6 6V2h12.500v20H6v-4M0 12h9" />
            <path d="M8 8.500l4.500 3.500L8 15.500z" fill="#000" stroke="none" />
          </svg>
          <StatusText $w={58}>1×45</StatusText>
          <svg width="19" height="24" viewBox="0 0 19 24" fill="none" stroke="#000" strokeWidth="1.700">
            <path d="M13.500 6V2H1v20h12.500v-4M6 12h9" />
            <path d="M13.500 8.500L18.500 12l-5 3.500z" fill="#000" stroke="none" />
          </svg>
          <StatusText $w={60}>- | 45</StatusText>
          <Spacer />
          <SizeGrip width="12" height="12" viewBox="0 0 12 12" fill="#bdbdbd">
            <path d="M8 0h3v3H8zM4 4h3v3H4zM8 4h3v3H8zM0 8h3v3H0zM4 8h3v3H4zM8 8h3v3H8z" />
          </SizeGrip>
        </StatusBar>

        <HintBar>
          <svg width="24" height="24" viewBox="0 0 24 24">
            <defs><Gradient id="hint" from="#1ba0e6" to="#0b6fd0" /></defs>
            <circle cx="12" cy="12" r="12" fill="url(#hint)" />
            <path d="M11 5.500h2.300v2.300H11zM11 9.500h2.300v9H11z" fill="#fff" />
          </svg>
          <HintText>{"Clicking on cells or in headers outputs\nthe corresponding data instances"}</HintText>
          <HintButton>Ok, got it</HintButton>
          <svg width="18" height="18" viewBox="0 0 18 18" stroke="#333" strokeWidth="4">
            <path d="M2 2l14 14M16 2L2 16" />
          </svg>
        </HintBar>
      </Dialog>

      <Taskbar>
        <WeatherSlot>
          <svg width="36" height="40" viewBox="0 0 36 40">
            <path d="M8 11q6 6 5 10.500Q11.500 25 8 25t-5-4q-.5-3 1.500-6l1.500 1q1.500-2 2-5z" fill="#f0573a" />
            <path d="M8 17q3 3 2.500 5.500Q9.500 25 8 25t-2.500-2.500Q5.500 20 8 17z" fill="#ffb547" />
            <path d="M17 2h10v22a8 8 0 1 1-10 0z" fill="#bfe0fb" />
            <path d="M20 8h4v18h-4z" fill="#dd3550" />
            <circle cx="22" cy="30.500" r="4.800" fill="#d62f4d" />
          </svg>
          <WeatherBadge $bg="#ff9ba8" $fg="#111">1</WeatherBadge>
        </WeatherSlot>
        {pinned.map((name) => (
          <AppSlot key={name}>
            <AppIcon name={name} />
            {name === "whatsapp" && <Badge $bg="#ff37e8" $fg="#111">5</Badge>}
            {name === "folder" && <RunMark />}
          </AppSlot>
        ))}
        <AppSlot><Chrome /></AppSlot>
        <AppSlot><AppIcon name="teams" /></AppSlot>
        <AppSlot>
          <Chrome />
          <Badge $profile $bg="radial-gradient(ellipse 5px 8px at 48% 38%, #5c5c5c 40%, rgba(0,0,0,0) 90%), linear-gradient(115deg, #f2f2f2 30%, #9a9a9a 42%, #e8e8e8 52%, #4c4c4c 66%, #b8b8b8 76%, #222)" $fg="#fff" />
          <RunMark />
        </AppSlot>
        <AppSlot>
          <Chrome />
          <Badge $profile $bg="#bf360c" $fg="#e9d0c6">M</Badge>
          <RunMark />
        </AppSlot>
        <AppSlot $focused>
          <OrangeFace size={33} />
          <RunMark $active />
        </AppSlot>
        <Tray>
          <svg width="18" height="11" viewBox="0 0 18 11" fill="none" stroke="#fff" strokeWidth="2">
            <path d="M1.500 9.500L9 2l7.500 7.500" />
          </svg>
          <Spacer $w={26} />
          <svg width="24" height="19" viewBox="0 0 24 19" fill="none" stroke="#fff" strokeWidth="1.800">
            <path d="M1 7q11-11 22 0" stroke="#5b5a6e" />
            <path d="M4 10.500q8-8 16 0M7.500 13.500q4.500-4.500 9 0" />
            <circle cx="12" cy="16.300" r="1.500" fill="#fff" />
          </svg>
          <Spacer $w={12} />
          <svg width="24" height="20" viewBox="0 0 24 20" fill="none" stroke="#fff" strokeWidth="1.700">
            <path d="M1 6.500h3.500L10 2v16l-5.500-4.500H1z" />
            <path d="M13 6.500q2.500 3.500 0 7" />
            <path d="M16 3.500q5 6.500 0 13M19.500 1q6.500 9 0 18" stroke="#5b5a6e" />
          </svg>
          <Spacer $w={12} />
          <svg width="24" height="22" viewBox="0 0 24 22" fill="none" stroke="#fff" strokeWidth="1.500">
            <rect x="1" y="5.500" width="20" height="14" rx="3" />
            <rect x="3.500" y="8" width="15" height="9" rx="1" fill="#fff" />
            <path d="M22.500 10.500v4.500" strokeWidth="3" />
            <path d="M5 0L0 9h3.500L2 15 9 6.500H5.500z" fill="#fff" stroke="#1e1e3a" strokeWidth="1" />
          </svg>
          <Clock>
            <div>14:44</div>
            <div>21/03/2024</div>
          </Clock>
          <svg width="22" height="25" viewBox="0 0 22 25">
            <path d="M0.500 19l2-4V9.500q1-7.500 7.500-8 7.500.5 8 8V15l2 4zM6.500 21h8q-4 4.500-8 0z" fill="#fff" />
            <path d="M7 9h6.500l-6 6.500h6.500" fill="none" stroke="#1e1e3a" strokeWidth="1.600" />
            <path d="M14 1.500h6.500l-5.500 6h6" fill="none" stroke="#1e1e3a" strokeWidth="3.500" />
            <path d="M14.500 1.500h5.500l-5 6h5.500" fill="none" stroke="#fff" strokeWidth="1.600" />
          </svg>
        </Tray>
      </Taskbar>
    </Desktop>
  );
}
